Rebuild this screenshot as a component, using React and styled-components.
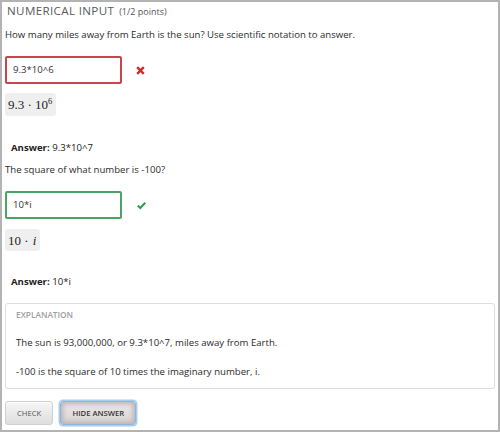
import styled, { createGlobalStyle } from "styled-components";

const Global = createGlobalStyle`
  html, body { margin: 0; padding: 0; background: #fff; }
  body { font-family: "Open Sans", "Liberation Sans", sans-serif; }
`;

const Frame = styled.div`
  width: 500px;
  height: 432px;
  box-sizing: border-box;
  border: 2px solid #b3b3b3;
  padding: 0 3px;
  color: #333;
`;

const Title = styled.h2`
  margin: 0;
  padding-left: 2px;
  font-size: 11.6px;
  font-weight: 400;
  letter-spacing: 0.35px;
  color: #5a5a5a;
  line-height: 18px;

  span {
    font-size: 9px;
    letter-spacing: 0;
    margin-left: 5px;
    color: #555;
  }
`;

const Question = styled.p`
  margin: 5px 0 0;
  font-size: 9.6px;
  line-height: 18px;
  color: #2b2b2b;
`;

const InputRow = styled.div`
  display: flex;
  align-items: center;
  margin-top: 12px;
  gap: 14px;
`;

const Field = styled.div`
  width: 117px;
  height: 28px;
  box-sizing: border-box;
  border: 2px solid ${(p) => (p.$ok ? "#4ba365" : "#c5474d")};
  border-radius: 2px;
  font-size: 9.6px;
  line-height: 24px;
  padding-left: 6px;
  color: #333;
`;

const Mark = styled.svg`
  width: 9px;
  height: 9px;
`;

const MathBox = styled.div`
  width: fit-content;
  margin-top: ${(p) => p.$top}px;
  height: ${(p) => p.$h}px;
  padding: 0 4px 0 3px;
  background: #efefef;
  border-radius: 3px;
  font-family: "Liberation Serif", "DejaVu Serif", serif;
  font-size: 13px;
  line-height: ${(p) => p.$h + 1}px;
  color: #222;

  sup {
    font-size: 8.5px;
    vertical-align: 5px;
    line-height: 0;
  }
  i {
    margin-left: 1px;
  }
`;

const Answer = styled.p`
  margin: ${(p) => p.$top}px 0 0;
  padding-left: 6px;
  font-size: 9.6px;
  line-height: 16px;
  color: #222;

  b {
    font-weight: 700;
  }
`;

const Explanation = styled.div`
  margin-top: 13px;
  height: 86px;
  box-sizing: border-box;
  border: 1px solid #ddd;
  border-radius: 3px;
  padding: 3px 10px 0;
`;

const ExplTitle = styled.div`
  font-size: 8.3px;
  font-weight: 600;
  color: #a0a0a0;
  line-height: 16px;
  margin-bottom: 12px;
`;

const ExplText = styled.p`
  margin: 0 0 13px;
  font-size: 9.6px;
  line-height: 16px;
  color: #2b2b2b;
`;

const Buttons = styled.div`
  display: flex;
  align-items: center;
  gap: 7px;
  margin-top: 12px;
`;

const Button = styled.button`
  height: 24px;
  padding: 0 ${(p) => (p.$focus ? 12 : 11)}px;
  font-family: "Open Sans", "Liberation Sans", sans-serif;
  font-size: 7.7px;
  font-weight: ${(p) => (p.$focus ? 600 : 400)};
  color: ${(p) => (p.$focus ? "#333" : "#555")};
  border: 1px solid #cfcfcf;
  border-radius: 3px;
  background: linear-gradient(#f6f6f6, #dedede);
  box-shadow: inset 0 1px 0 #fff;

  ${(p) =>
    p.$focus &&
    `
    width: 76px;
    padding: 0;
    background: linear-gradient(#ece8e8, #d9d4d4);
    border-color: #8fb3d9;
    box-shadow: 0 0 0 1.5px #a9cdee, inset 0 0 5px 2px #bcb2b2;
  `}
`;

const Cross = () => (
  <Mark viewBox="0 0 9 9">
    <path d="M1.2 1.2 L7.8 7.8 M7.8 1.2 L1.2 7.8" stroke="#c9302c" strokeWidth="2.4" />
  </Mark>
);

const Check = () => (
  <Mark viewBox="0 0 9 9" style={{ marginLeft: 1 }}>
    <path d="M0.8 4.6 L3.3 7 L8.3 1.8" stroke="#2e9d4c" strokeWidth="2.1" fill="none" />
  </Mark>
);

export default function App() {
  return (
    <Frame>
      <Global />
      <Title>
        NUMERICAL INPUT<span>(1/2 points)</span>
      </Title>
      <Question>
        How many miles away from Earth is the sun? Use scientific notation to answer.
      </Question>
      <InputRow>
        <Field>9.3*10^6</Field>
        <Cross />
      </InputRow>
      <MathBox $top={9} $h={23}>
        9.3 · 10<sup>6</sup>
      </MathBox>
      <Answer $top={24}>
        <b>Answer:</b> 9.3*10^7
      </Answer>
      <Question>The square of what number is -100?</Question>
      <InputRow>
        <Field $ok>10*i</Field>
        <Check />
      </InputRow>
      <MathBox $top={10} $h={22}>
        10 · <i>i</i>
      </MathBox>
      <Answer $top={23}>
        <b>Answer:</b> 10*i
      </Answer>
      <Explanation>
        <ExplTitle>EXPLANATION</ExplTitle>
        <ExplText>The sun is 93,000,000, or 9.3*10^7, miles away from Earth.</ExplText>
        <ExplText>-100 is the square of 10 times the imaginary number, i.</ExplText>
      </Explanation>
      <Buttons>
        <Button>CHECK</Button>
        <Button $focus>HIDE ANSWER</Button>
      </Buttons>
    </Frame>
  );
}
